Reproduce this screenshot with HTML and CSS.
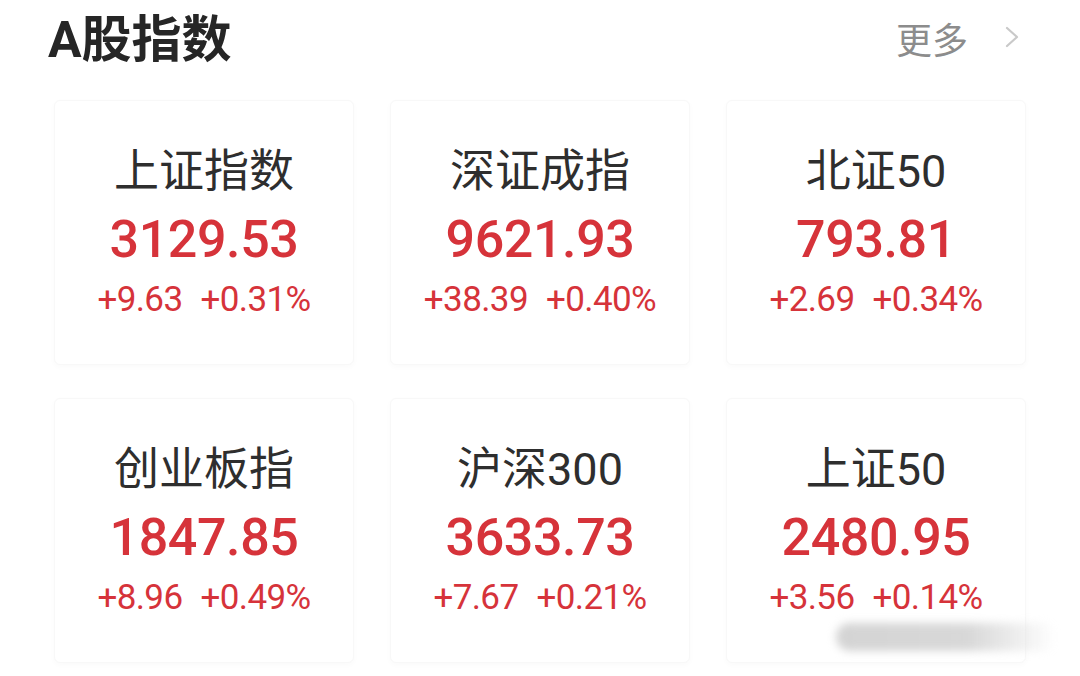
FILE: index.html
```html
<!DOCTYPE html>
<html lang="zh-CN">
  <head>
    <meta charset="UTF-8" />
    <meta name="viewport" content="width=device-width, initial-scale=1.0" />
    <title>A股指数</title>
    <link rel="stylesheet" href="styles.css">
  </head>
  <body>
    <!-- Header -->
    <div class="header">
      <h1 class="title">A股指数</h1>
      <a href="#" class="more">
        <span>更多</span>
        <svg class="chevron" width="16" height="22" viewBox="0 0 16 22">
          <path d="M3 2 L13 11 L3 20" fill="none" stroke="#c9c9c9" stroke-width="2.2" stroke-linecap="round" stroke-linejoin="round" />
        </svg>
      </a>
    </div>

    <!-- Index cards -->
    <div class="grid">
      <div class="card">
        <div class="name">上证指数</div>
        <div class="value">3129.53</div>
        <div class="change"><span>+9.63</span><span>+0.31%</span></div>
      </div>
      <div class="card">
        <div class="name">深证成指</div>
        <div class="value">9621.93</div>
        <div class="change"><span>+38.39</span><span>+0.40%</span></div>
      </div>
      <div class="card">
        <div class="name">北证50</div>
        <div class="value">793.81</div>
        <div class="change"><span>+2.69</span><span>+0.34%</span></div>
      </div>
      <div class="card">
        <div class="name">创业板指</div>
        <div class="value">1847.85</div>
        <div class="change"><span>+8.96</span><span>+0.49%</span></div>
      </div>
      <div class="card">
        <div class="name">沪深300</div>
        <div class="value">3633.73</div>
        <div class="change"><span>+7.67</span><span>+0.21%</span></div>
      </div>
      <div class="card">
        <div class="name">上证50</div>
        <div class="value">2480.95</div>
        <div class="change"><span>+3.56</span><span>+0.14%</span></div>
      </div>
    </div>

    <!-- blurred watermark -->
    <div class="watermark"></div>
  </body>
</html>
```

FILE: styles.css
```css
body {
  font-family: Roboto, "Noto Sans CJK SC", sans-serif;
  margin: 0;
  padding: 0;
  background-color: #ffffff;
  width: 1080px;
  height: 676px;
  overflow: hidden;
  position: relative;
}

/* Header */
.header {
  display: flex;
  justify-content: space-between;
  align-items: center;
  height: 80px;
  padding: 0 60px 0 48px;
}

.title {
  margin: 0;
  font-size: 50px;
  font-weight: 700;
  color: #262626;
  line-height: 80px;
}

.more {
  display: flex;
  align-items: center;
  gap: 36px;
  color: #8c8c8c;
  font-size: 36px;
  text-decoration: none;
  margin-top: -4px;
}

.chevron {
  display: block;
  margin-top: -2px;
}

/* Cards grid */
.grid {
  display: grid;
  grid-template-columns: repeat(3, 300px);
  grid-auto-rows: 265px;
  column-gap: 36px;
  row-gap: 33px;
  padding: 20px 0 0 54px;
}

.card {
  display: flex;
  flex-direction: column;
  justify-content: center;
  align-items: center;
  background-color: #ffffff;
  border: 1px solid #f8f8f8;
  border-radius: 6px;
  box-shadow: 0 2px 6px rgba(0, 0, 0, 0.025);
}

.name {
  font-size: 45px;
  line-height: 56px;
  color: #2e2e2e;
}

.value {
  font-size: 52px;
  font-weight: 500;
  line-height: 64px;
  color: #d6333a;
  margin-top: 8px;
  letter-spacing: -0.4px;
}

.change {
  display: flex;
  gap: 18px;
  font-size: 35px;
  line-height: 44px;
  color: #d6333a;
  margin-top: 6px;
  letter-spacing: -0.6px;
}

.watermark {
  position: absolute;
  left: 836px;
  top: 623px;
  width: 220px;
  height: 28px;
  border-radius: 14px;
  background: linear-gradient(to right, #d4d4d4 0%, #d8d8d8 60%, rgba(230, 230, 230, 0) 100%);
  filter: blur(4px);
}
```
